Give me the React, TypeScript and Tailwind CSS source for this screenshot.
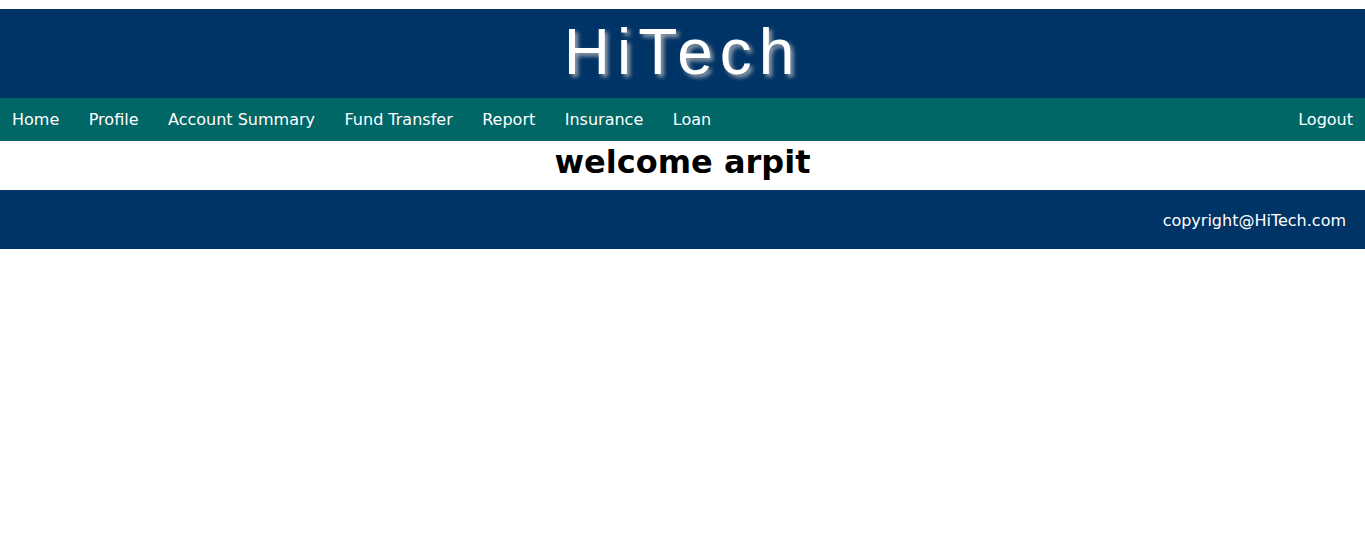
const links = ["Home", "Profile", "Account Summary", "Fund Transfer", "Report", "Insurance", "Loan"];

export default function App() {
  return (
    <div className="bg-white min-h-screen pt-[9px] text-white" style={{ fontFamily: '"DejaVu Sans", Verdana, sans-serif' }}>
      <header className="bg-[#003366] h-[89px] flex items-center justify-center">
        <h1
          className="text-[64px] leading-none tracking-[7px] pb-[4px] text-white [text-shadow:3px_3px_4px_#9aa3ad]"
          style={{ fontFamily: '"Liberation Sans", Arial, sans-serif' }}
        >
          HiTech
        </h1>
      </header>
      <nav className="bg-[#006666] h-[43px] flex items-center justify-between px-3 text-[16px] pt-[1px]">
        <ul className="flex gap-[29.5px]">
          {links.map((l) => (
            <li key={l}>{l}</li>
          ))}
        </ul>
        <span>Logout</span>
      </nav>
      <div className="h-[49px] flex items-center justify-center pb-[7px]">
        <h2 className="text-black font-bold text-[32px] leading-none">welcome arpit</h2>
      </div>
      <footer className="bg-[#003366] h-[59px] flex items-center justify-end pr-[19px] text-[16px] pt-[2px]">
        copyright@HiTech.com
      </footer>
    </div>
  );
}
